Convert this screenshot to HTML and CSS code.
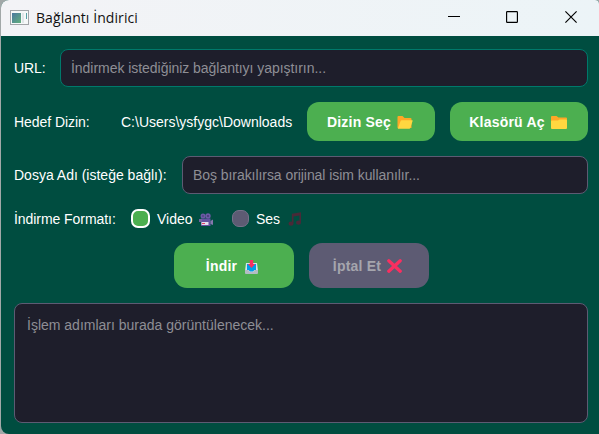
FILE: index.html
```
<!DOCTYPE html>
<html lang="tr">
<head>
<meta charset="utf-8">
<title>Bağlantı İndirici</title>
<link rel="stylesheet" href="styles.css">
</head>
<body>
<div class="window">
  <header class="titlebar">
    <svg class="app-icon" width="19" height="15" viewBox="0 0 19 15">
      <defs><linearGradient id="screen" x1="0" y1="0" x2="1" y2="1"><stop offset="0" stop-color="#4b78a0"/><stop offset="1" stop-color="#62b07c"/></linearGradient></defs>
      <rect x=".5" y=".5" width="18" height="14" fill="#f6f8f8" stroke="#a2a5a8"/>
      <rect x="2" y="3" width="9" height="10" fill="url(#screen)"/>
      <path d="M12 3h2v10h-2z" fill="#e0e6e8"/><path d="M16 3h1v6h-1z" fill="#58a0a5"/>
    </svg>
    <span class="title">Bağlantı İndirici</span>
    <div class="controls">
      <svg width="12" height="12" viewBox="0 0 12 12"><path d="M0 5.5h12" stroke="#000"/></svg>
      <svg width="12" height="12" viewBox="0 0 12 12"><rect x=".6" y=".6" width="10.8" height="10.8" rx=".7" fill="none" stroke="#000" stroke-width="1.15"/></svg>
      <svg class="close" width="12" height="12" viewBox="0 0 12 12"><path d="M.4.4l11.2 11.2M11.6.4L.4 11.6" stroke="#000" stroke-width="1.15"/></svg>
    </div>
  </header>
  <main class="content">
    <div class="row">
      <label class="label url-label">URL:</label>
      <div class="input focused"><span class="hint-url">İndirmek istediğiniz bağlantıyı yapıştırın...</span></div>
    </div>
    <div class="row folder-row">
      <label class="label folder-label">Hedef Dizin:</label>
      <span class="path">C:\Users\ysfygc\Downloads</span>
      <button class="btn pick">Dizin Seç
        <svg width="16" height="13" viewBox="0 0 16 13"><path d="M.5 12V1q0-1 1-1h4l2 2h6q1 0 1 1v9z" fill="#ffa726"/><path d="M.8 12.700L3.600 5q.3-.7 1-.7h10.600q.7 0 .4.8l-2.300 7q-.2.600-1 .6z" fill="#ffd740"/></svg>
      </button>
      <button class="btn open">Klasörü Aç
        <svg width="16" height="13" viewBox="0 0 16 13"><path d="M0 8V1q0-1 1-1h4.500l2 1.500H15q1 0 1 1V8z" fill="#ffa726"/><path d="M0 5.500q0-1 1-1h6l1.500-1H15q1 0 1 1V12q0 1-1 1H1q-1 0-1-1z" fill="#ffd740"/></svg>
      </button>
    </div>
    <div class="row">
      <label class="label name-label">Dosya Adı (isteğe bağlı):</label>
      <div class="input"><span class="hint-name">Boş bırakılırsa orijinal isim kullanılır...</span></div>
    </div>
    <div class="row format-row">
      <span class="label format-label">İndirme Formatı:</span>
      <span class="radio checked"></span>
      <span class="option video">Video</span>
      <svg class="camera" width="15" height="14" viewBox="0 0 15 14">
        <circle cx="4" cy="3" r="2.500" fill="#6b5aa5"/><circle cx="9" cy="3" r="2.700" fill="#6b5aa5"/>
        <circle cx="4" cy="3" r=".8" fill="#40356f"/><circle cx="9" cy="3" r=".9" fill="#40356f"/>
        <path d="M2 5.500h9.500V13H2z" fill="#6352a0"/><path d="M0 6h3v3H0z" fill="#71639f"/>
        <path d="M11.500 8L14 6.500V12l-2.500-1z" fill="#8578ad"/>
        <path d="M2.500 9h7v3h-7z" fill="#e5dcec"/><path d="M3 10h3v1H3z" fill="#e04468"/>
      </svg>
      <span class="radio"></span>
      <span class="option audio">Ses</span>
      <svg class="music" width="14" height="14" viewBox="0 0 14 14"><path d="M4 1.700L13 .3v3L4 4.700z" fill="#492a38"/><path d="M4.700 11.500V2M12.200 10.500V1" stroke="#492a38" stroke-width="1.600"/><ellipse cx="3" cy="11.700" rx="2.500" ry="2.100" fill="#492a38"/><ellipse cx="10.500" cy="10.700" rx="2.500" ry="2.100" fill="#492a38"/></svg>
    </div>
    <div class="row actions">
      <button class="btn action download">İndir
        <svg width="13" height="14" viewBox="0 0 13 14"><path d="M1 3h11l1 8v2H0v-2z" fill="#d6e2e8"/><path d="M2 4h9v6H9.500L8 11.500H5L3.500 10H2z" fill="#009ee8"/><path d="M0 10h3l2 2h3l2-2h3v3q0 1-1 1H1q-1 0-1-1z" fill="#b3bcc4"/><path d="M4.800 0h3.400v4h2L6.500 8 2.800 4h2z" fill="#f92f60"/></svg>
      </button>
      <button class="btn action cancel" disabled>İptal Et
        <svg width="15" height="14" viewBox="0 0 15 14"><path d="M1.800 1.800l11.400 10.400M13.200 1.800L1.800 12.200" stroke="#f92f60" stroke-width="3.300" stroke-linecap="round"/></svg>
      </button>
    </div>
    <div class="log"><span class="hint-log">İşlem adımları burada görüntülenecek...</span></div>
  </main>
</div>
</body>
</html>
```
FILE: styles.css
```
* { box-sizing: border-box; }
body {
  margin: 0;
  width: 599px;
  height: 434px;
  overflow: hidden;
  background: #a2a8a8;
  font: 14px/18px "Liberation Sans", Arial, sans-serif;
  color: #fff;
  white-space: nowrap;
}
.window {
  margin-left: 1px;
  height: 434px;
  border-radius: 8px 4px 0 8px;
  overflow: hidden;
  background: #004d40;
}
svg { display: block; flex: none; }
.titlebar {
  height: 36px;
  display: flex;
  align-items: center;
  padding: 0 22px 2px 9px;
  background: linear-gradient(90deg, #f3f3f6, #ecf4f7);
  color: #111;
}
.title {
  margin-left: 7px;
  padding-top: 1px;
  font: 14px/20px "Open Sans", "Noto Sans", sans-serif;
  letter-spacing: .08px;
}
.controls { display: flex; gap: 46px; margin-left: auto; }
.close { margin-left: 1px; }
.content {
  display: flex;
  flex-direction: column;
  gap: 15px;
  padding: 13px 11px 11px 13px;
}
.row { display: flex; align-items: center; }
.label { flex: none; letter-spacing: -.06px; }
.url-label { width: 46px; }
.folder-label { width: 107px; }
.name-label { width: 168px; letter-spacing: 0; }
.format-label { width: 117px; }
.path { width: 186px; }
.input, .log {
  background: #1e1e2b;
  border: 1px solid #5d5b73;
  color: #8e8e95;
}
.input {
  flex: 1;
  height: 38px;
  border-radius: 8px;
  padding: 9px 10px;
}
.focused { border-color: #00796b; }
.hint-url { letter-spacing: -.04px; }
.hint-name { letter-spacing: -.06px; }
.btn {
  height: 39px;
  display: flex;
  align-items: center;
  justify-content: center;
  border: 0;
  border-radius: 12px;
  padding: 0;
  background: #4caf50;
  color: #fff;
  font: bold 14px/18px "Liberation Sans", Arial, sans-serif;
  letter-spacing: .2px;
}
.btn svg { margin-left: 6px; }
.pick { width: 128px; margin-right: 15px; padding-right: 2px; }
.open { width: 138px; padding-right: 2px; }
.pick svg, .open svg { margin-top: 2px; }
.format-row { height: 19px; }
.radio {
  width: 17px;
  height: 17px;
  margin: 0 7px 0 1px;
  border: 1px solid #77718a;
  border-radius: 7px;
  background: #5d5b73;
}
.radio.checked {
  width: 19px;
  height: 19px;
  margin: 0 7px 0 0;
  border: 2px solid #fff;
  background: #4caf50;
}
.video { width: 42px; }
.camera { margin: 2px 17px 0 0; }
.audio { width: 32px; }
.actions { justify-content: center; gap: 15px; }
.action { width: 120px; height: 45px; border-radius: 13px; }
.download { padding-right: 3px; }
.cancel { padding-right: 2px; }
.download svg { margin: 2px 0 0 8px; }
.cancel { background: #5d5b73; color: #a5a5ad; }
.log {
  height: 120px;
  border-radius: 8px;
  padding: 12px;
}
```
